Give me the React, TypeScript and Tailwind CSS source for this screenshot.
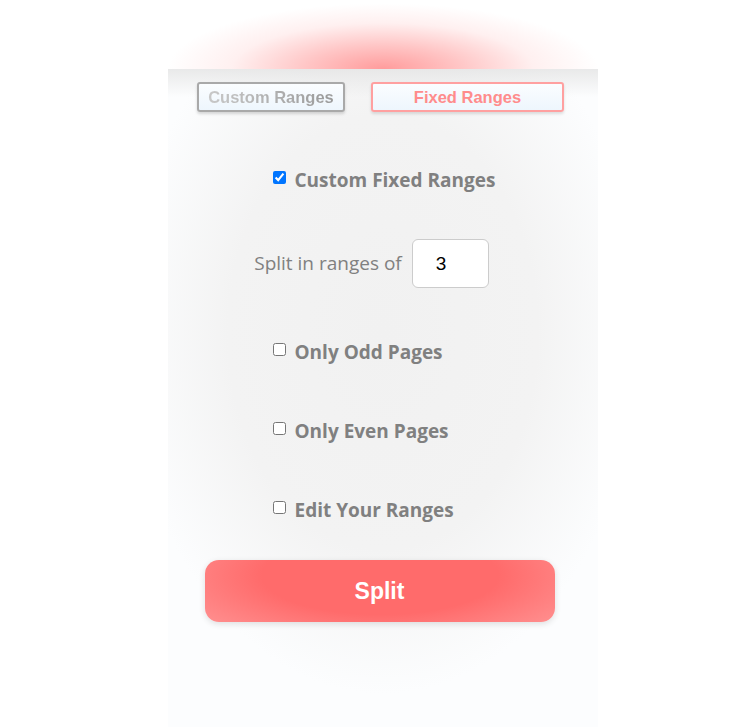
import React, { useState } from 'react';

const labelFont = { fontFamily: '"Open Sans", "Noto Sans", sans-serif' };

const Option: React.FC<{ label: string; checked: boolean; onChange: () => void }> = ({ label, checked, onChange }) => (
  <label className="flex items-center gap-[9px] cursor-pointer">
    <input type="checkbox" checked={checked} onChange={onChange} className="w-[13px] h-[13px] -translate-y-[3px] accent-[#0075ff]" />
    <span className="text-[19px] leading-[27px] font-bold text-[#808080]" style={labelFont}>
      {label}
    </span>
  </label>
);

export default function App() {
  const [fixed, setFixed] = useState(true);
  const [odd, setOdd] = useState(false);
  const [even, setEven] = useState(false);
  const [edit, setEdit] = useState(false);
  const [size, setSize] = useState('3');

  return (
    <div className="w-[750px] h-[727px] bg-white flex justify-center overflow-hidden">
      <div className="w-[430px] ml-[15px] flex flex-col">
        {/* glow above the panel */}
        <div className="h-[69px] bg-[radial-gradient(ellipse_50%_95%_at_50%_100%,rgba(255,150,150,0.95)_0%,rgba(255,165,165,0.65)_35%,rgba(255,205,205,0.3)_70%,rgba(255,255,255,0)_100%)]" />
        <div className="h-[658px] bg-[linear-gradient(to_bottom,rgba(228,228,228,0.8),rgba(240,240,240,0)_28px),radial-gradient(ellipse_60%_55%_at_50%_40%,#f1f1f1_0%,#f3f3f3_60%,#fcfdfe_100%)] flex flex-col items-center">
          <div className="flex gap-[26px] pt-[13px] mr-[4px]" style={{ fontFamily: '"Liberation Sans", Arial, sans-serif' }}>
            <button className="w-[148px] h-[30px] rounded-[3px] border-2 border-[#a9a9a9] bg-gradient-to-b from-[#fbfdff] to-[#eef6fd] shadow-[0_2px_3px_rgba(0,0,0,0.15)] text-[16.5px] font-bold">
              <span className="bg-gradient-to-r from-[#c8c8c8] to-[#9a9a9a] bg-clip-text text-transparent">Custom Ranges</span>
            </button>
            <button className="w-[193px] h-[30px] rounded-[3px] border-2 border-[#ffa0a0] bg-gradient-to-b from-[#fbfdff] to-[#eef6fd] shadow-[0_2px_3px_rgba(0,0,0,0.12)] text-[16.5px] font-bold text-[#ff8c8c]">
              Fixed Ranges
            </button>
          </div>

          <div className="w-full flex flex-col mt-[55px]">
            <div className="pl-[105px]">
              <Option label="Custom Fixed Ranges" checked={fixed} onChange={() => setFixed(!fixed)} />
            </div>
            <div className="flex items-center justify-center gap-[10px] mt-[45px] mr-[22px]">
              <span className="text-[19px] text-[#808080]" style={labelFont}>Split in ranges of</span>
              <input
                value={size}
                onChange={(e) => setSize(e.target.value)}
                className="w-[77px] h-[49px] rounded-[6px] border border-[#cccccc] bg-white pl-[23px] text-[19px] text-black outline-none"
                style={{ fontFamily: '"Liberation Sans", Arial, sans-serif' }}
              />
            </div>
            <div className="pl-[105px] flex flex-col gap-[52px] mt-[51px]">
              <Option label="Only Odd Pages" checked={odd} onChange={() => setOdd(!odd)} />
              <Option label="Only Even Pages" checked={even} onChange={() => setEven(!even)} />
              <Option label="Edit Your Ranges" checked={edit} onChange={() => setEdit(!edit)} />
            </div>
          </div>

          <button
            className="mt-[36px] mr-[6px] w-[350px] h-[62px] rounded-[14px] bg-[radial-gradient(ellipse_75%_140%_at_50%_25%,#ff6b6b_45%,#ff9c9c_100%)] shadow-[0_2px_6px_rgba(0,0,0,0.12)] text-white text-[23px] font-bold"
            style={{ fontFamily: '"Liberation Sans", Arial, sans-serif' }}
          >
            Split
          </button>
        </div>
      </div>
    </div>
  );
}
